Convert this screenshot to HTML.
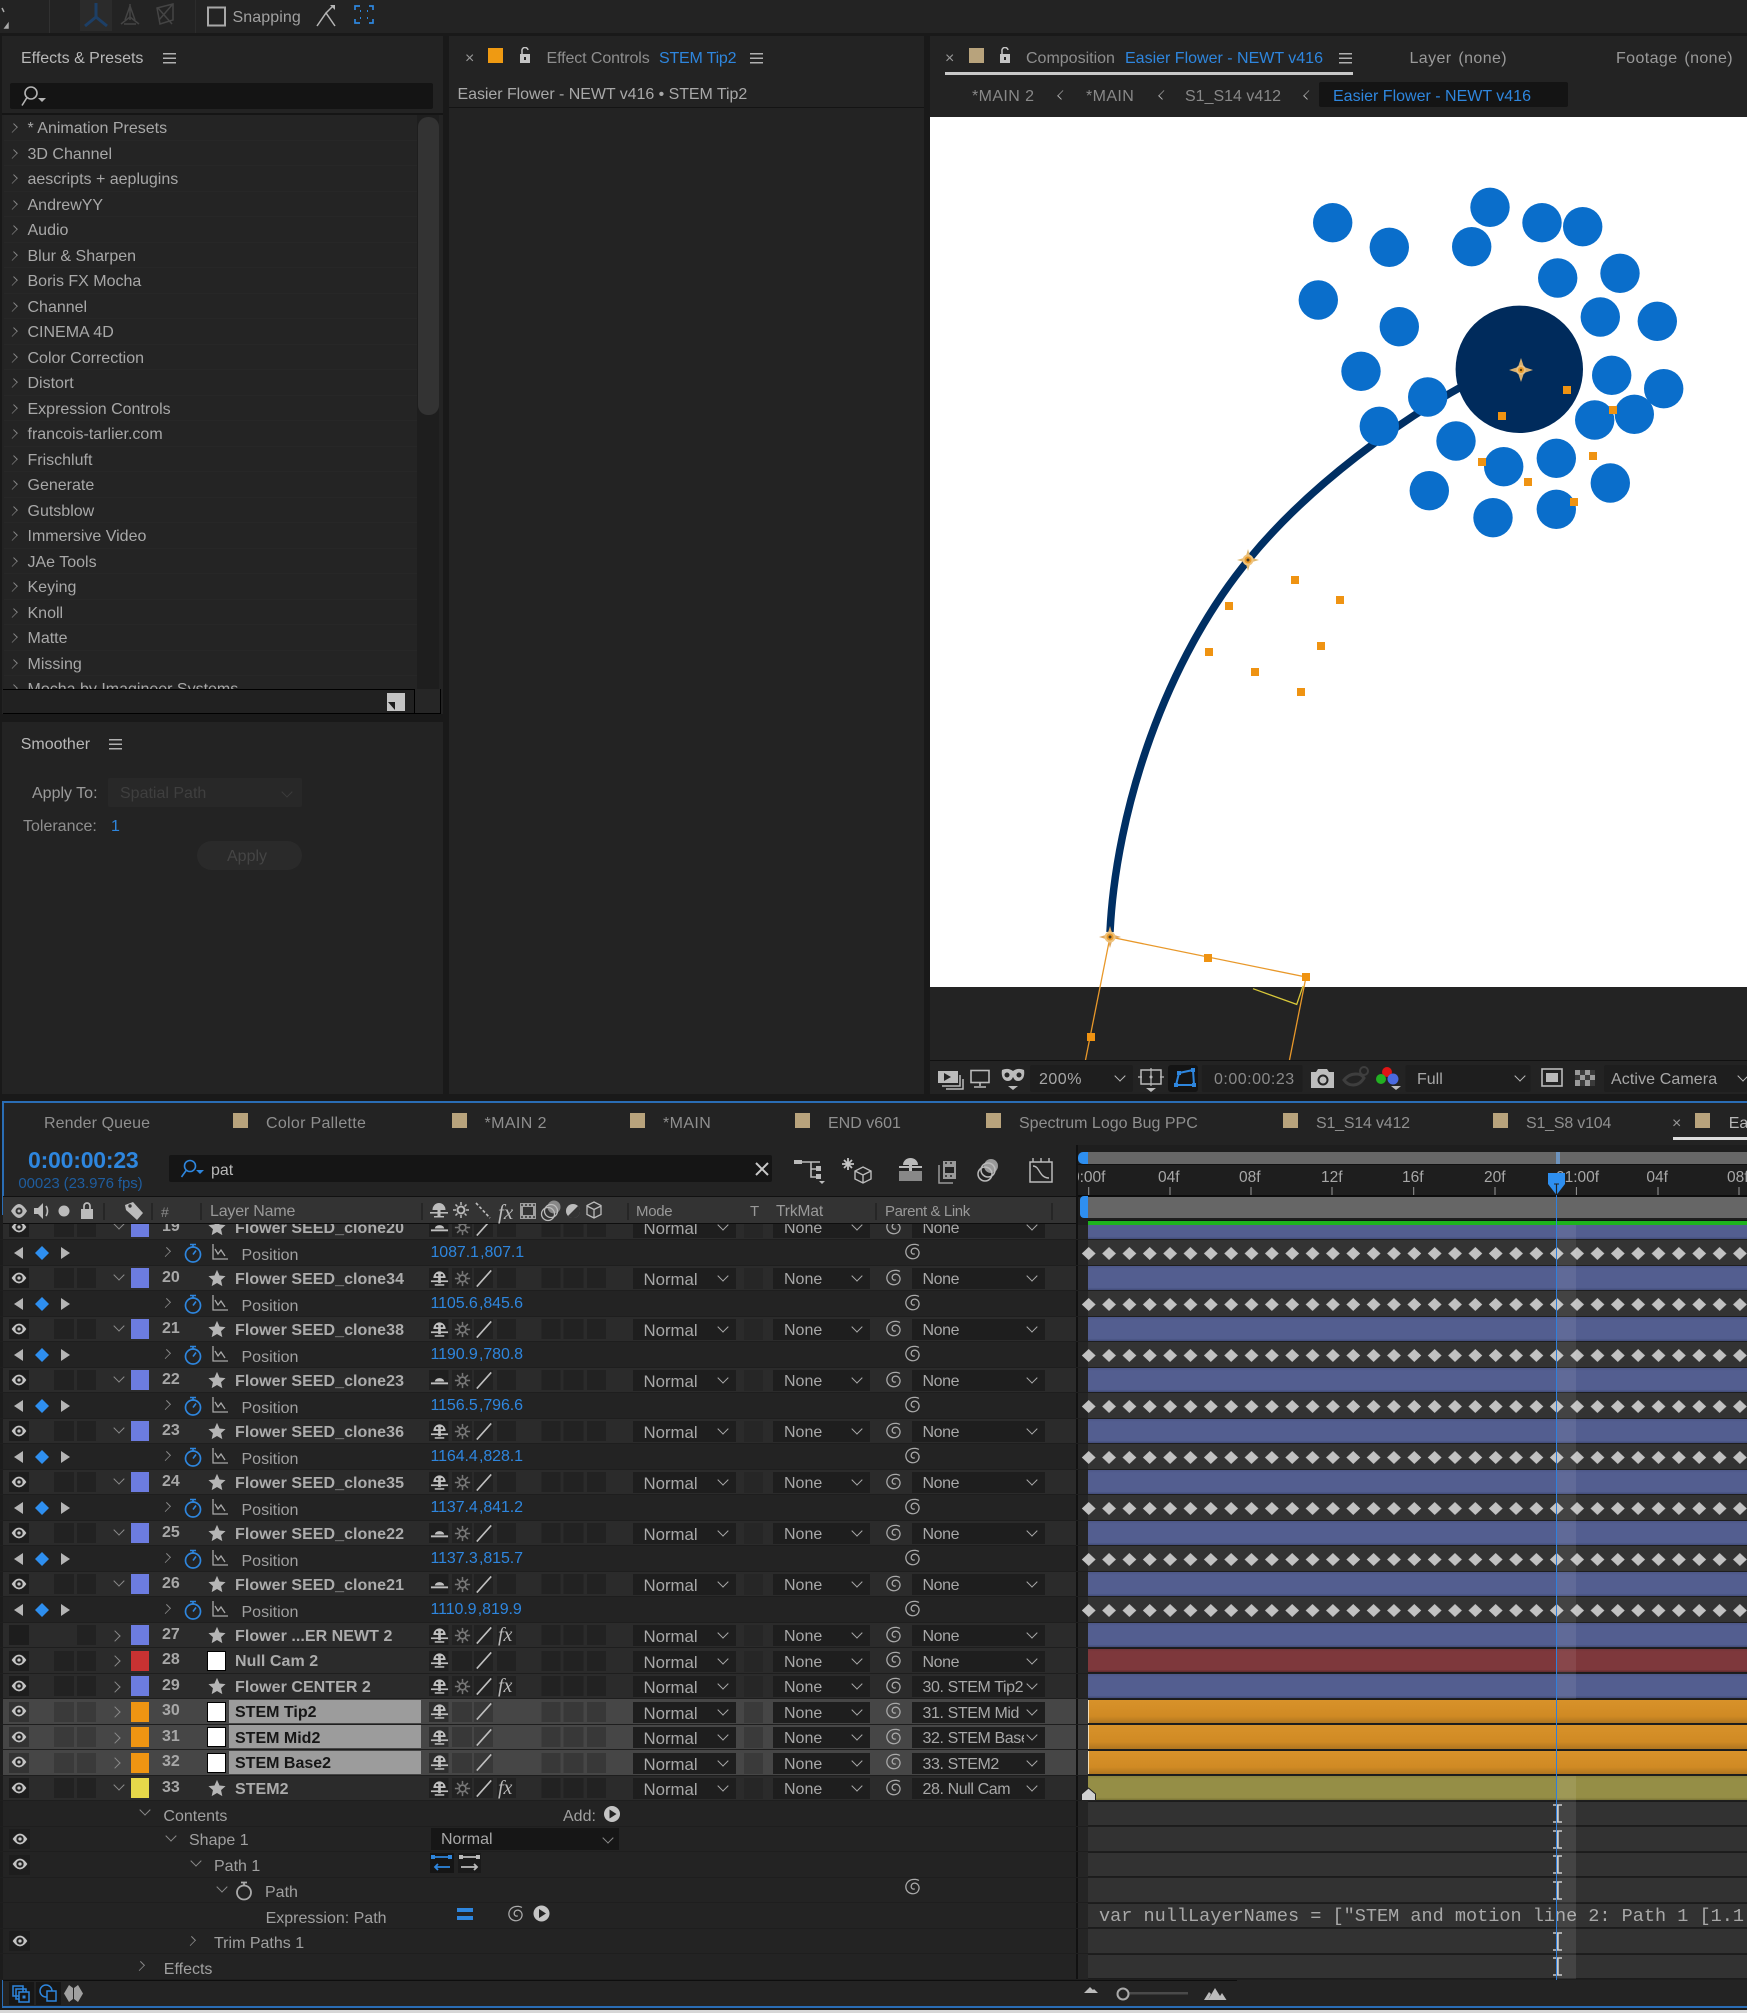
<!DOCTYPE html>
<html><head><meta charset="utf-8"><title>After Effects</title>
<style>
html,body{margin:0;padding:0;background:#191919}
#w{position:relative;width:1747px;height:2013px;overflow:hidden;background:#191919;font:16px "Liberation Sans",sans-serif;color:#a8a8a8}
.a{position:absolute;white-space:nowrap;line-height:20px;transform:translateY(1px)}
.d{position:absolute}
.bl{color:#2e86de}
.hb{position:absolute;width:13px;height:11px;background:repeating-linear-gradient(#b0b0b0 0 1.5px,transparent 1.5px 4.5px)}
.sw{position:absolute;width:15px;height:15px;background:#b8a37c}
.cv{position:absolute;width:7px;height:7px;border-left:1.6px solid #b0b0b0;border-bottom:1.6px solid #b0b0b0;transform:rotate(45deg) scaleX(.7)}
.list{position:absolute;left:4px;top:115.25px;width:413px;height:574px;overflow:hidden}
.list div{position:relative;height:25.5px;line-height:27px;box-sizing:border-box;border-bottom:1px solid #272727;padding-left:23.5px;white-space:nowrap;background:#242424;color:#a8a8a8}
.list div:before{content:"";position:absolute;left:5px;top:9px;width:7px;height:7px;border-right:1.2px solid #888;border-top:1.2px solid #888;transform:rotate(45deg) scaleX(.7)}
#rows{position:absolute;left:0;top:1214.75px;width:1747px;height:765px;overflow:hidden}
.r{position:relative;height:25.5px;box-sizing:border-box;border-bottom:1px solid #1e1e1e}
.r>*{position:absolute;white-space:nowrap;font-weight:normal;font-style:normal;line-height:20px}
.l{background:linear-gradient(90deg,#1c1c1c 3px,#2b2b2b 3px,#2b2b2b 1076px,#111 1076px,#111 1078px,#252525 1078px,#252525 1088px,#1c1c1c 1088px)}
.p{background:linear-gradient(90deg,#1c1c1c 3px,#232323 3px,#232323 1076px,#111 1076px,#111 1078px,#252525 1078px,#252525 1088px,#1c1c1c 1088px)}
.q{background:linear-gradient(90deg,#1c1c1c 3px,#464646 3px,#464646 1076px,#111 1076px,#111 1078px,#3c3c3c 1078px,#3c3c3c 1088px,#1c1c1c 1088px)}
.r b,.sb{display:block}
.b1{left:9px;top:2.5px;width:20px;height:20px;background:#1d1d1d}
.b2{left:54px;top:2.5px;width:19.5px;height:20px;background:#222}
.b3{left:76.5px;top:2.5px;width:19.5px;height:20px;background:#222}
.q .b2,.q .b3{background:#3a3a3a}
.q .b1{background:#333}
.eye{left:11px;top:6px;width:16px;height:12px}
.td,.tr{width:7px;height:7px;border-right:1.3px solid #8a8a8a;border-bottom:1.3px solid #8a8a8a}
.td{transform:rotate(45deg) scaleX(1)}
.tr{transform:rotate(-45deg)}
.l>.td,.q>.td{left:115px;top:5px}
.l>.tr,.q>.tr{left:111px;top:9px}
.lb{left:130.5px;top:2.5px;width:18px;height:20px}
.n{left:162px;top:2px;font-weight:bold!important;color:#a8a8a8}
.st{left:207.5px;top:3.5px;width:18px;height:18px}
.wb{left:207px;top:2.5px;width:17px;height:18px;background:#fff;border:1px solid #000}
.nm{left:235px;top:4px;font-weight:bold!important;color:#acacac;letter-spacing:.05px}
.sel{left:229px;top:.5px;width:192px;height:23px;background:#9c9c9c}
.nd{left:235px;top:4px;font-weight:bold!important;color:#161616}
.sb{left:429px;top:2.5px;width:177px;height:20px;background:linear-gradient(90deg,#1f1f1f 19.5px,transparent 19.5px,transparent 23px,#222 23px,#222 43px,transparent 43px,transparent 45px,#222 45px,#222 64px,transparent 64px,transparent 68px,#222 68px,#222 87px,transparent 87px,transparent 112.5px,#222 112.5px,#222 131.5px,transparent 131.5px,transparent 134.7px,#222 134.7px,#222 154.6px,transparent 154.6px,transparent 158px,#222 158px)}
.q .sb{background:linear-gradient(90deg,#2e2e2e 19.5px,transparent 19.5px,transparent 23px,#383838 23px,#383838 43px,transparent 43px,transparent 45px,#383838 45px,#383838 64px,transparent 64px,transparent 112.5px,#383838 112.5px,#383838 131.5px,transparent 131.5px,transparent 134.7px,#383838 134.7px,#383838 154.6px,transparent 154.6px,transparent 158px,#383838 158px)}
.shy{left:430px;top:3px;width:19px;height:19px}
.sun{left:454px;top:4px;width:17px;height:17px}
.sl{left:475px;top:3px;width:18px;height:19px}
.fx{left:498px;top:1px;font:italic 20px "Liberation Serif",serif!important;color:#b8b8b8!important;line-height:22px!important}
.m,.tm,.pb{top:2.5px;height:21px;line-height:24px!important;background:#1e1e1e;color:#a8a8a8;box-sizing:border-box}
.m{left:632.5px;width:103.5px;padding-left:11px;font-size:16.8px}
.tb{left:744px;top:2.5px;width:19px;height:21px;background:#262626}
.q .tb{background:#3a3a3a}
.tm{left:773px;width:97px;padding-left:11px}
.pb{left:912px;width:133px;padding-left:10.5px;letter-spacing:-.4px}
.m:after,.tm:after,.pb:after{content:"";position:absolute;right:9px;top:4px;width:7px;height:7px;border-right:1.2px solid #aaa;border-bottom:1.2px solid #aaa;transform:rotate(45deg)}
.pb u{display:block;width:101px;overflow:hidden;text-decoration:none}
.sp1{left:885px;top:3px;width:18px;height:18px}
.sp2{left:904px;top:3px;width:18px;height:18px}
.bar{left:1088px;width:659px;top:.5px;height:23.5px}
.bb{background:linear-gradient(#4c5788,#535e90 12%,#535e90 90%,#414b78)}
.br{background:linear-gradient(#743438,#7e383c 12%,#7e383c 90%,#5f2a2e)}
.bo{background:linear-gradient(#d8922a,#d08a24 70%,#b07520);border-left:1.5px solid #f0dcb8;box-sizing:border-box}
.by{background:linear-gradient(#8a8440,#958e46 12%,#958e46 90%,#7a7436)}
.be{background:#323232}
.kf{left:1080px;top:0;width:667px;height:25px}
.kl{left:14px;top:7px;width:10px;height:12px}
.kd{left:35px;top:6px;width:14px;height:14px}
.kr{left:60px;top:7px;width:10px;height:12px}
.pv{left:162px;top:8px;width:7px;height:7px;border-right:1.2px solid #8a8a8a;border-top:1.2px solid #8a8a8a;transform:rotate(45deg) scaleX(.75)}
.sw2{left:184px;top:3px;width:18px;height:20px}
.gr{left:211px;top:3px;width:18px;height:18px}
.pt{left:241.5px;top:5.5px;color:#a0a0a0}
.v{left:430.5px;top:2.5px;color:#2e86de;word-spacing:-3px;letter-spacing:-.1px}
.c{color:#a0a0a0}
.ib{left:1552px;top:3px;width:11px;height:19px}
</style></head><body><div id="w">
<svg width="0" height="0" style="position:absolute">
<defs>
<pattern id="dp" patternUnits="userSpaceOnUse" x="-1.475" y="0" width="20.35" height="25"><polygon points="10.175,7 17.1,13.5 10.175,20 3.3,13.5" fill="#c2c2c2"/></pattern>
<symbol id="eye" viewBox="0 0 24 18"><path d="M1 9C5 3 9 1 12 1s7 2 11 8c-4 6-8 8-11 8S5 15 1 9z" fill="#c4c4c4"/><circle cx="12" cy="9" r="5.500" fill="#222"/><circle cx="12" cy="9" r="2.500" fill="#c4c4c4"/></symbol>
<symbol id="shy" viewBox="0 0 20 20"><path d="M3.500 9.500a6.500 7 0 0 1 13 0z" fill="#c0c0c0"/><circle cx="7.500" cy="6.500" r="1.300" fill="#222"/><circle cx="12.500" cy="6.500" r="1.300" fill="#222"/><rect x="8.600" y="9" width="2.800" height="6" fill="#c0c0c0"/><rect x="1" y="12" width="18" height="1.800" fill="#c0c0c0"/><rect x="5" y="16" width="10" height="1.600" fill="#c0c0c0"/></symbol>
<symbol id="fl" viewBox="0 0 20 20"><path d="M5 11a5 3.500 0 0 1 10 0z" fill="#c0c0c0"/><rect x="1" y="12" width="18" height="2" fill="#c0c0c0"/></symbol>
<symbol id="sun" viewBox="0 0 20 20"><circle cx="10" cy="10" r="4" fill="none" stroke="#777" stroke-width="2"/><path d="M10 1v4M10 15v4M1 10h4M15 10h4M3.600 3.600l3 3M13.400 13.400l3 3M16.400 3.600l-3 3M6.600 13.400l-3 3" stroke="#777" stroke-width="1.800"/></symbol>
<symbol id="sl" viewBox="0 0 20 20"><path d="M2 19L18 1" stroke="#c0c0c0" stroke-width="1.800"/></symbol>
<symbol id="star" viewBox="0 0 20 20"><polygon points="10,1 12.800,7.200 19.500,7.900 14.500,12.400 15.900,19 10,15.600 4.100,19 5.500,12.400 .5,7.900 7.200,7.200" fill="#b5b5b5"/></symbol>
<symbol id="sp" viewBox="0 0 20 20"><path d="M16.500 2.800C15 1.500 11 1 8 2 3.500 3.500 1 8 2.500 12.500c1.500 4 6 6 10 4.500 4-1.500 5.500-6.500 3-9.500-2.500-3-7-2-7.500 1.500-.3 2.500 2 4 4 3" fill="none" stroke="#aaa" stroke-width="1.400"/></symbol>
<symbol id="tl" viewBox="0 0 10 12"><polygon points="9,0 9,12 0,6" fill="#b5b5b5"/></symbol>
<symbol id="trr" viewBox="0 0 10 12"><polygon points="1,0 1,12 10,6" fill="#b5b5b5"/></symbol>
<symbol id="kd" viewBox="0 0 14 14"><polygon points="7,0 14,7 7,14 0,7" fill="#2e8ff0"/></symbol>
<symbol id="sw" viewBox="0 0 18 20"><circle cx="9" cy="11.500" r="7.500" fill="none" stroke="#2e86de" stroke-width="1.700"/><path d="M6 1.500h6M9 2v2.500M9 11.500l3-4" stroke="#2e86de" stroke-width="1.600" fill="none"/></symbol>
<symbol id="gr" viewBox="0 0 18 18"><path d="M2 1v15h15M4 6l3 5 3-4 4 6" fill="none" stroke="#a8a8a8" stroke-width="1.300"/></symbol>
<symbol id="ib" viewBox="0 0 11 19"><path d="M1 1h9M1 18h9" stroke="#c8c8c8" stroke-width="1.500"/><path d="M5.500 1v17" stroke="#c8c8c8" stroke-width="2.500"/></symbol>
</defs></svg>

<!-- top toolbar -->
<div class="d" style="left:0;top:0;width:1747px;height:33px;background:#232323"></div>
<div class="d" style="left:49px;top:0;width:1px;height:33px;background:#313131"></div>
<div class="d" style="left:195px;top:0;width:1px;height:33px;background:#2c2c2c"></div>
<div class="d" style="left:80px;top:0;width:32px;height:31px;background:#2b2b2b"></div>
<svg class="d" style="left:0;top:0" width="380" height="33"><path d="M2 8l2 4M8 24v4h-3z" stroke="#aaa" stroke-width="1.500" fill="#aaa"/><path d="M96 3v14M96 17l-11 9M96 17l11 9" stroke="#1d3f66" stroke-width="3" fill="none"/><path d="M130 4v16M130 17l-9 7M130 17l9 7M124 24h12M130 6l-5 14M130 6l5 14" stroke="#444" stroke-width="1.500" fill="none"/><path d="M157 8l16-4v16l-13 4zM158 8l14 16M172 5l-13 15" stroke="#444" stroke-width="1.500" fill="none"/><rect x="208" y="7.500" width="17" height="18" fill="none" stroke="#a8a8a8" stroke-width="2"/><path d="M317 26l9-13 9 13M326 13l7-7" stroke="#b5b5b5" stroke-width="1.500" fill="none"/><path d="M330 5h5v5z" fill="#b5b5b5"/><path d="M355 10V6h5M369 6h4v4M355 19v4h5M369 23h4v-4" stroke="#2e86de" stroke-width="1.700" fill="none"/><path d="M360 11h1M367 11h1M360 18h1M367 18h1" stroke="#2e86de" stroke-width="2"/></svg>
<div class="a" style="left:232.500px;top:7px;color:#a0a0a0;letter-spacing:.1px">Snapping</div>

<!-- Effects panel -->
<div class="d" style="left:2px;top:36px;width:441px;height:678px;background:#232323"></div>
<div class="a" style="left:21px;top:48px;color:#b8b8b8">Effects &amp; Presets</div>
<div class="hb" style="left:163px;top:53px"></div>
<div class="d" style="left:10px;top:83px;width:423px;height:26px;background:#141414;border-radius:2px"></div>
<svg class="d" style="left:18px;top:85px" width="30" height="23"><circle cx="13" cy="8" r="6" fill="none" stroke="#b4b4b4" stroke-width="1.600"/><path d="M9 12.500l-5 8" stroke="#b4b4b4" stroke-width="1.600"/><path d="M20 13h8l-4 4z" fill="#b4b4b4"/></svg>
<div class="d" style="left:2px;top:113px;width:441px;height:2px;background:#151515"></div>
<div class="list">
<div>* Animation Presets</div><div>3D Channel</div><div>aescripts + aeplugins</div><div>AndrewYY</div><div>Audio</div><div>Blur &amp; Sharpen</div><div>Boris FX Mocha</div><div>Channel</div><div>CINEMA 4D</div><div>Color Correction</div><div>Distort</div><div>Expression Controls</div><div>francois-tarlier.com</div><div>Frischluft</div><div>Generate</div><div>Gutsblow</div><div>Immersive Video</div><div>JAe Tools</div><div>Keying</div><div>Knoll</div><div>Matte</div><div>Missing</div><div>Mocha by Imagineer Systems</div>
</div>
<div class="d" style="left:417px;top:115px;width:22px;height:574px;background:#1e1e1e"></div>
<div class="d" style="left:418px;top:117px;width:21px;height:298px;background:#333;border-radius:10px"></div>
<div class="d" style="left:3px;top:689px;width:412px;height:25px;box-sizing:border-box;border-top:1px solid #000;border-bottom:1px solid #000;border-right:1px solid #000;background:#212121"></div>
<div class="d" style="left:415px;top:689px;width:26px;height:25px;background:#262626;box-sizing:border-box;border-bottom:1px solid #000;border-right:1px solid #000"></div>
<div class="d" style="left:387px;top:693px;width:18px;height:18px;background:#c4c4c4"></div>
<svg class="d" style="left:387px;top:701px" width="10" height="10"><path d="M1 1h7v8z" fill="#1c1c1c"/></svg>

<!-- Smoother panel -->
<div class="d" style="left:2px;top:722px;width:441px;height:372px;background:#232323"></div>
<div class="a" style="left:20.700px;top:734px;color:#b8b8b8">Smoother</div>
<div class="hb" style="left:109px;top:739px"></div>
<div class="a" style="left:32px;top:783px;color:#9a9a9a">Apply To:</div>
<div class="d" style="left:108px;top:778px;width:194px;height:29px;background:#282828;border-radius:2px"></div>
<div class="a" style="left:120px;top:783px;color:#3f3f3f">Spatial Path</div>
<div class="d" style="left:283px;top:788px;width:7px;height:7px;border-right:1px solid #3c3c3c;border-bottom:1px solid #3c3c3c;transform:rotate(45deg)"></div>
<div class="a" style="left:23px;top:816px;color:#8f8f8f">Tolerance:</div>
<div class="a bl" style="left:111px;top:816px">1</div>
<div class="d" style="left:197px;top:841px;width:105px;height:29px;background:#2a2a2a;border-radius:15px"></div>
<div class="a" style="left:227px;top:846px;color:#454545">Apply</div>

<!-- Effect Controls -->
<div class="d" style="left:449px;top:36px;width:475px;height:1058px;background:#232323"></div>
<div class="a" style="left:465px;top:48px;color:#999">×</div>
<div class="d" style="left:488px;top:48px;width:15px;height:15px;background:#ef9a12"></div>
<svg class="d" style="left:518px;top:47px" width="14" height="16"><path d="M4 7V4a3 3 0 0 1 6-1" fill="none" stroke="#c4c4c4" stroke-width="1.500"/><rect x="2" y="7" width="10" height="9" fill="#c4c4c4"/><rect x="6" y="10" width="2" height="3" fill="#222"/></svg>
<div class="a" style="left:546.500px;top:48px;color:#8e8e8e;letter-spacing:-.1px">Effect Controls</div>
<div class="a bl" style="left:659px;top:48px;letter-spacing:-.2px">STEM Tip2</div>
<div class="hb" style="left:750px;top:53px"></div>
<div class="a" style="left:457.500px;top:84px;color:#a8a8a8;letter-spacing:-.05px">Easier Flower - NEWT v416 • STEM Tip2</div>
<div class="d" style="left:449px;top:107px;width:475px;height:1px;background:#141414"></div>

<!-- Composition -->
<div class="d" style="left:930px;top:36px;width:817px;height:81px;background:#232323"></div>
<div class="a" style="left:945px;top:48px;color:#999">×</div>
<div class="d" style="left:968.600px;top:48px;width:15px;height:15px;background:#b8a37c"></div>
<svg class="d" style="left:998px;top:47px" width="14" height="16"><path d="M4 7V4a3 3 0 0 1 6-1" fill="none" stroke="#c4c4c4" stroke-width="1.500"/><rect x="2" y="7" width="10" height="9" fill="#c4c4c4"/><rect x="6" y="10" width="2" height="3" fill="#222"/></svg>
<div class="a" style="left:1026px;top:48px;color:#8e8e8e">Composition</div>
<div class="a bl" style="left:1125px;top:48px">Easier Flower - NEWT v416</div>
<div class="hb" style="left:1339px;top:53px"></div>
<div class="d" style="left:945px;top:72px;width:408px;height:3px;background:#c8c8c8"></div>
<div class="a" style="left:1409.500px;top:48px;color:#9a9a9a;word-spacing:2px;letter-spacing:.4px">Layer (none)</div>
<div class="a" style="left:1616px;top:48px;color:#9a9a9a;word-spacing:2px;letter-spacing:.4px">Footage (none)</div>
<div class="a" style="left:972px;top:86px;color:#888;letter-spacing:.4px">*MAIN 2</div>
<i class="cv" style="left:1058px;top:91px"></i>
<div class="a" style="left:1086px;top:86px;color:#888;letter-spacing:.4px">*MAIN</div>
<i class="cv" style="left:1159px;top:91px"></i>
<div class="a" style="left:1185px;top:86px;color:#888">S1_S14 v412</div>
<i class="cv" style="left:1304px;top:91px"></i>
<div class="d" style="left:1319px;top:82px;width:249px;height:25px;background:#141414;border-radius:2px"></div>
<div class="a bl" style="left:1333px;top:86px">Easier Flower - NEWT v416</div>

<!-- viewer -->
<div class="d" style="left:930px;top:117px;width:817px;height:870px;background:#fff"></div>
<div class="d" style="left:930px;top:987px;width:817px;height:107px;background:#232323"></div>
<svg class="d" style="left:930px;top:117px" width="817" height="943" viewBox="930 117 817 943">
<path d="M1110 932C1116 810 1165 660 1250 558C1310 485 1400 420 1470 382" fill="none" stroke="#002f63" stroke-width="7.500"/>
<circle cx="1519.300" cy="369.300" r="63.700" fill="#002b5c"/>
<g fill="#0a6ecb"><circle cx="1332.700" cy="222.700" r="19.700"/><circle cx="1389.300" cy="247.300" r="19.700"/><circle cx="1490" cy="207.300" r="19.700"/><circle cx="1471.700" cy="246.700" r="19.700"/><circle cx="1542" cy="222.700" r="19.700"/><circle cx="1582.700" cy="226.700" r="19.700"/><circle cx="1557.700" cy="278" r="19.700"/><circle cx="1620" cy="273.300" r="19.700"/><circle cx="1318.300" cy="300" r="19.700"/><circle cx="1399.300" cy="326.700" r="19.700"/><circle cx="1600.300" cy="317" r="19.700"/><circle cx="1657.300" cy="321.300" r="19.700"/><circle cx="1361" cy="371.300" r="19.700"/><circle cx="1427.700" cy="397" r="19.700"/><circle cx="1611.700" cy="375.300" r="19.700"/><circle cx="1663.700" cy="388.700" r="19.700"/><circle cx="1379.300" cy="426.300" r="19.700"/><circle cx="1594.700" cy="420" r="19.700"/><circle cx="1634.300" cy="414.300" r="19.700"/><circle cx="1456" cy="441" r="19.700"/><circle cx="1503.700" cy="466.700" r="19.700"/><circle cx="1556.300" cy="458.300" r="19.700"/><circle cx="1610.300" cy="483" r="19.700"/><circle cx="1429.300" cy="490.700" r="19.700"/><circle cx="1493" cy="517.700" r="19.700"/><circle cx="1556.300" cy="509.300" r="19.700"/></g>
<path d="M1110 937L1306 977M1110 937L1085.500 1060M1306 977L1289.500 1060" stroke="#e8982a" stroke-width="1.300" fill="none"/>
<path d="M1253 988.700L1296.700 1004.400L1303 986" stroke="#d8c83a" stroke-width="1.300" fill="none"/>
<g fill="#ef9312"><rect x="1563" y="386" width="8" height="8"/><rect x="1498" y="412" width="8" height="8"/><rect x="1609" y="406" width="8" height="8"/><rect x="1589" y="452" width="8" height="8"/><rect x="1478" y="458" width="8" height="8"/><rect x="1524" y="478" width="8" height="8"/><rect x="1570" y="498" width="8" height="8"/><rect x="1291" y="576" width="8" height="8"/><rect x="1336" y="596" width="8" height="8"/><rect x="1225" y="602" width="8" height="8"/><rect x="1317" y="642" width="8" height="8"/><rect x="1205" y="648" width="8" height="8"/><rect x="1251" y="668" width="8" height="8"/><rect x="1297" y="688" width="8" height="8"/><rect x="1204" y="954" width="8" height="8"/><rect x="1302" y="973" width="8" height="8"/><rect x="1087" y="1033" width="8" height="8"/></g>
<g><polygon points="1521,358 1524,367 1533,370 1524,373 1521,382 1518,373 1509,370 1518,367" fill="#d8b070"/><circle cx="1521" cy="370" r="5" fill="#e8c080"/><circle cx="1521" cy="370" r="3" fill="#e89a2a"/><circle cx="1521" cy="370" r="1.200" fill="#5a4010"/>
<polygon points="1248,549 1250.500,557.500 1259,560 1250.500,562.500 1248,571 1245.500,562.500 1237,560 1245.500,557.500" fill="#e0b870"/><circle cx="1248" cy="560" r="5.500" fill="#efc37c"/><circle cx="1248" cy="560" r="3.500" fill="#e89a2a"/><circle cx="1248" cy="560" r="1.500" fill="#4a3a20"/>
<polygon points="1110,926 1112.500,934.500 1121,937 1112.500,939.500 1110,948 1107.500,939.500 1099,937 1107.500,934.500" fill="#e0a860"/><circle cx="1110" cy="937" r="5.500" fill="#efc37c"/><circle cx="1110" cy="937" r="3.500" fill="#e89a2a"/><circle cx="1110" cy="937" r="1.500" fill="#4a3a20"/></g>
</svg>
<div class="d" style="left:930px;top:1060px;width:817px;height:1px;background:#111"></div>
<!-- viewer toolbar -->
<svg class="d" style="left:930px;top:1062px" width="817" height="32">
<path d="M8 9h20v12H8z" fill="#bbb"/><path d="M14 11l7 4-7 4z" fill="#232323"/><path d="M30 13v11H12" fill="none" stroke="#bbb" stroke-width="1.500"/><path d="M33 17v10H16" fill="none" stroke="#bbb" stroke-width="1.500"/>
<rect x="41" y="8.500" width="18" height="12" fill="none" stroke="#bbb" stroke-width="1.600"/><path d="M50 20v4M44 25h12" stroke="#bbb" stroke-width="1.600"/>
<path d="M72 8c5-2 8-1 11 1 3-2 6-3 11-1 1 6-1 11-6 11-3 0-4-2-5-4-1 2-2 4-5 4-5 0-7-5-6-11z" fill="#bbb"/><circle cx="77" cy="13" r="2.500" fill="#232323"/><circle cx="89" cy="13" r="2.500" fill="#232323"/><path d="M78 24h10l-5 4z" fill="#bbb"/>
<rect x="100" y="3" width="103" height="27" fill="#1e1e1e" rx="2"/>
<rect x="211" y="8" width="20" height="14" fill="none" stroke="#bbb" stroke-width="1.500"/><path d="M221 6v18M208 15h4M230 15h4" stroke="#bbb" stroke-width="1.200"/><circle cx="221" cy="15" r="1.500" fill="#bbb"/><path d="M216 26h10l-5 4z" fill="#bbb"/>
<rect x="238" y="3" width="30" height="27" fill="#141414" rx="3"/><path d="M246 23l3-12 14-3 1 15z" fill="none" stroke="#2e86de" stroke-width="2"/><g fill="#2e86de"><rect x="244" y="21" width="4" height="4"/><rect x="262" y="21" width="4" height="4"/><rect x="247" y="9" width="4" height="4"/><rect x="261" y="6" width="4" height="4"/></g>
<rect x="271.700" y="3" width="101" height="27" fill="#1e1e1e" rx="2"/>
<path d="M381 10h5l2-3h9l2 3h5v16h-23z" fill="#bdbdbd"/><circle cx="393" cy="18" r="4.500" fill="#bdbdbd" stroke="#232323" stroke-width="2"/>
<path d="M414 18c4-5 8-6 12-6s6 1 8 4c-3 5-7 7-11 7s-7-2-9-5z" fill="none" stroke="#3e3e3e" stroke-width="3"/><circle cx="434" cy="9" r="4" fill="none" stroke="#3e3e3e" stroke-width="2"/>
<circle cx="457" cy="10" r="5" fill="#e01515"/><circle cx="451" cy="17" r="5" fill="#22b022"/><circle cx="463" cy="17" r="5.500" fill="#4a6ae0"/><path d="M461 24h10l-5 4z" fill="#bbb"/>
<rect x="475.500" y="3" width="125" height="27" fill="#1e1e1e" rx="2"/>
<rect x="612" y="7" width="20" height="17" fill="none" stroke="#bbb" stroke-width="1.600"/><rect x="616" y="11" width="12" height="9" fill="#bbb"/>
<rect x="645" y="8" width="20" height="16" fill="#9a9a9a"/><path d="M650 8h5v5h-5zM660 8h5v5h-5zM645 13h5v5h-5zM655 13h5v5h-5zM650 18h5v6h-5zM660 18h5v6h-5z" fill="#3a3a3a"/>
<rect x="674" y="3" width="143" height="27" fill="#1e1e1e" rx="2"/>
</svg>
<div class="a" style="left:1039px;top:1068.500px;color:#a8a8a8;letter-spacing:.5px">200%</div>
<div class="d" style="left:1116px;top:1072px;width:7px;height:7px;border-right:1.300px solid #bbb;border-bottom:1.300px solid #bbb;transform:rotate(45deg)"></div>
<div class="a" style="left:1214px;top:1068.500px;color:#8a8a8a;letter-spacing:.5px">0:00:00:23</div>
<div class="a" style="left:1417px;top:1068.500px;color:#a8a8a8">Full</div>
<div class="d" style="left:1516px;top:1072px;width:7px;height:7px;border-right:1.300px solid #bbb;border-bottom:1.300px solid #bbb;transform:rotate(45deg)"></div>
<div class="a" style="left:1611px;top:1068.500px;color:#a8a8a8;letter-spacing:.1px">Active Camera</div>
<div class="d" style="left:1739px;top:1072px;width:7px;height:7px;border-right:1.300px solid #bbb;border-bottom:1.300px solid #bbb;transform:rotate(45deg)"></div>

<!-- Timeline frame -->
<div class="d" style="left:2px;top:1101px;width:1745px;height:906px;background:#232323"></div>
<div class="d" style="left:2px;top:1101px;width:1745px;height:1.500px;background:#2a6db5"></div>
<div class="d" style="left:2px;top:1101px;width:1.500px;height:906px;background:#2a6db5"></div>
<div class="a" style="left:44px;top:1113px;color:#8f8f8f;letter-spacing:.1px">Render Queue</div>
<div class="sw" style="left:233px;top:1113px"></div><div class="a" style="left:266px;top:1113px;color:#8f8f8f;letter-spacing:.3px">Color Pallette</div>
<div class="sw" style="left:452px;top:1113px"></div><div class="a" style="left:484.500px;top:1113px;color:#8f8f8f;letter-spacing:.4px">*MAIN 2</div>
<div class="sw" style="left:630px;top:1113px"></div><div class="a" style="left:663px;top:1113px;color:#8f8f8f;letter-spacing:.4px">*MAIN</div>
<div class="sw" style="left:795px;top:1113px"></div><div class="a" style="left:828px;top:1113px;color:#8f8f8f">END v601</div>
<div class="sw" style="left:986px;top:1113px"></div><div class="a" style="left:1019px;top:1113px;color:#8f8f8f">Spectrum Logo Bug PPC</div>
<div class="sw" style="left:1283px;top:1113px"></div><div class="a" style="left:1316px;top:1113px;color:#8f8f8f;letter-spacing:-.2px">S1_S14 v412</div>
<div class="sw" style="left:1492.600px;top:1113px"></div><div class="a" style="left:1526px;top:1113px;color:#8f8f8f;letter-spacing:-.2px">S1_S8 v104</div>
<div class="a" style="left:1672px;top:1113px;color:#999">×</div>
<div class="sw" style="left:1695px;top:1113px"></div><div class="a" style="left:1728.700px;top:1113px;color:#b8b8b8">Easier Flower</div>
<div class="d" style="left:1673px;top:1137px;width:74px;height:3px;background:#dcdcdc"></div>

<div class="a" style="left:28px;top:1149px;font-size:23px;font-weight:bold;color:#2e86de;line-height:20px;letter-spacing:-.2px">0:00:00:23</div>
<div class="a" style="left:18.400px;top:1173px;font-size:15px;color:#1f5d9e;letter-spacing:-.1px">00023 (23.976 fps)</div>
<div class="d" style="left:169px;top:1155px;width:603px;height:27px;background:#151515;border-radius:2px"></div>
<svg class="d" style="left:178px;top:1158px" width="28" height="22"><circle cx="12" cy="8" r="5.500" fill="none" stroke="#2e86de" stroke-width="1.600"/><path d="M8.500 12l-5 7" stroke="#2e86de" stroke-width="1.600"/><path d="M18 12h8l-4 4z" fill="#2e86de"/></svg>
<div class="a" style="left:211px;top:1160px;color:#b8b8b8">pat</div>
<svg class="d" style="left:755px;top:1162px" width="14" height="14"><path d="M1 1l12 12M13 1L1 13" stroke="#c8c8c8" stroke-width="2"/></svg>
<!-- timeline tool icons -->
<svg class="d" style="left:790px;top:1155px" width="270" height="30">
<path d="M6 7h10M16 7h14M21 7v15h9M21 14h8" stroke="#bbb" stroke-width="1.600" fill="none"/><rect x="4" y="5" width="8" height="4" fill="#bbb"/><rect x="26" y="11" width="5" height="5" fill="#bbb"/><rect x="26" y="19" width="5" height="5" fill="#bbb"/><path d="M29 26h6l-3 3z" fill="#bbb"/>
<path d="M58 3v12M52 9h12M54 5l8 8M62 5l-8 8" stroke="#c4c4c4" stroke-width="1.800"/><path d="M73 12l8 4v8l-8 4-8-4v-8zM65 16l8 4 8-4M73 20v8" stroke="#bbb" stroke-width="1.400" fill="#232323"/>
<path d="M113 10a7.500 7 0 0 1 15 0z" fill="#bbb"/><rect x="119" y="10" width="3" height="6" fill="#bbb"/><rect x="109" y="11" width="23" height="2" fill="#bbb"/><rect x="109" y="16" width="23" height="10" fill="#888"/>
<rect x="153" y="6" width="13" height="18" fill="#999"/><path d="M149 10v18h14" fill="none" stroke="#999" stroke-width="1.500"/><rect x="155" y="12" width="9" height="6" fill="#232323"/><path d="M155 8h2M160 8h2M155 21h2M160 21h2" stroke="#232323" stroke-width="1.500"/>
<circle cx="201" cy="11" r="7" fill="#999"/><circle cx="198" cy="15" r="7" fill="none" stroke="#bbb" stroke-width="1.500"/><circle cx="195" cy="19" r="7" fill="none" stroke="#bbb" stroke-width="1.500"/>
<rect x="240" y="7" width="22" height="20" fill="none" stroke="#bbb" stroke-width="1.500"/><path d="M243 11c7 0 6 12 16 12M243 3v4M259 3v4M251 3v4" stroke="#bbb" stroke-width="1.400" fill="none"/>
</svg>

<!-- rows -->
<div id="rows">
<div class="r l"><b class="b1"></b><svg class="eye"><use href="#eye"/></svg><b class="b2"></b><b class="b3"></b><i class="td"></i><i class="lb" style="background:#6c7ce0"></i><span class="n">19</span><svg class="st"><use href="#star"/></svg><span class="nm">Flower SEED_clone20</span><b class="sb"></b><svg class="shy"><use href="#fl"/></svg><svg class="sun"><use href="#sun"/></svg><svg class="sl"><use href="#sl"/></svg><b class="m">Normal</b><b class="tb"></b><b class="tm">None</b><svg class="sp1"><use href="#sp"/></svg><b class="pb">None</b><i class="bar bb"></i></div>
<div class="r p"><svg class="kl"><use href="#tl"/></svg><svg class="kd"><use href="#kd"/></svg><svg class="kr"><use href="#trr"/></svg><i class="pv"></i><svg class="sw2"><use href="#sw"/></svg><svg class="gr"><use href="#gr"/></svg><span class="pt">Position</span><span class="v">1087.1 ,807.1</span><svg class="sp2"><use href="#sp"/></svg><svg class="kf"><rect x="8" y="0" width="659" height="25" fill="#333"/><rect x="0" y="0" width="667" height="25" fill="url(#dp)"/></svg></div>
<div class="r l"><b class="b1"></b><svg class="eye"><use href="#eye"/></svg><b class="b2"></b><b class="b3"></b><i class="td"></i><i class="lb" style="background:#6c7ce0"></i><span class="n">20</span><svg class="st"><use href="#star"/></svg><span class="nm">Flower SEED_clone34</span><b class="sb"></b><svg class="shy"><use href="#shy"/></svg><svg class="sun"><use href="#sun"/></svg><svg class="sl"><use href="#sl"/></svg><b class="m">Normal</b><b class="tb"></b><b class="tm">None</b><svg class="sp1"><use href="#sp"/></svg><b class="pb">None</b><i class="bar bb"></i></div>
<div class="r p"><svg class="kl"><use href="#tl"/></svg><svg class="kd"><use href="#kd"/></svg><svg class="kr"><use href="#trr"/></svg><i class="pv"></i><svg class="sw2"><use href="#sw"/></svg><svg class="gr"><use href="#gr"/></svg><span class="pt">Position</span><span class="v">1105.6 ,845.6</span><svg class="sp2"><use href="#sp"/></svg><svg class="kf"><rect x="8" y="0" width="659" height="25" fill="#333"/><rect x="0" y="0" width="667" height="25" fill="url(#dp)"/></svg></div>
<div class="r l"><b class="b1"></b><svg class="eye"><use href="#eye"/></svg><b class="b2"></b><b class="b3"></b><i class="td"></i><i class="lb" style="background:#6c7ce0"></i><span class="n">21</span><svg class="st"><use href="#star"/></svg><span class="nm">Flower SEED_clone38</span><b class="sb"></b><svg class="shy"><use href="#shy"/></svg><svg class="sun"><use href="#sun"/></svg><svg class="sl"><use href="#sl"/></svg><b class="m">Normal</b><b class="tb"></b><b class="tm">None</b><svg class="sp1"><use href="#sp"/></svg><b class="pb">None</b><i class="bar bb"></i></div>
<div class="r p"><svg class="kl"><use href="#tl"/></svg><svg class="kd"><use href="#kd"/></svg><svg class="kr"><use href="#trr"/></svg><i class="pv"></i><svg class="sw2"><use href="#sw"/></svg><svg class="gr"><use href="#gr"/></svg><span class="pt">Position</span><span class="v">1190.9 ,780.8</span><svg class="sp2"><use href="#sp"/></svg><svg class="kf"><rect x="8" y="0" width="659" height="25" fill="#333"/><rect x="0" y="0" width="667" height="25" fill="url(#dp)"/></svg></div>
<div class="r l"><b class="b1"></b><svg class="eye"><use href="#eye"/></svg><b class="b2"></b><b class="b3"></b><i class="td"></i><i class="lb" style="background:#6c7ce0"></i><span class="n">22</span><svg class="st"><use href="#star"/></svg><span class="nm">Flower SEED_clone23</span><b class="sb"></b><svg class="shy"><use href="#fl"/></svg><svg class="sun"><use href="#sun"/></svg><svg class="sl"><use href="#sl"/></svg><b class="m">Normal</b><b class="tb"></b><b class="tm">None</b><svg class="sp1"><use href="#sp"/></svg><b class="pb">None</b><i class="bar bb"></i></div>
<div class="r p"><svg class="kl"><use href="#tl"/></svg><svg class="kd"><use href="#kd"/></svg><svg class="kr"><use href="#trr"/></svg><i class="pv"></i><svg class="sw2"><use href="#sw"/></svg><svg class="gr"><use href="#gr"/></svg><span class="pt">Position</span><span class="v">1156.5 ,796.6</span><svg class="sp2"><use href="#sp"/></svg><svg class="kf"><rect x="8" y="0" width="659" height="25" fill="#333"/><rect x="0" y="0" width="667" height="25" fill="url(#dp)"/></svg></div>
<div class="r l"><b class="b1"></b><svg class="eye"><use href="#eye"/></svg><b class="b2"></b><b class="b3"></b><i class="td"></i><i class="lb" style="background:#6c7ce0"></i><span class="n">23</span><svg class="st"><use href="#star"/></svg><span class="nm">Flower SEED_clone36</span><b class="sb"></b><svg class="shy"><use href="#shy"/></svg><svg class="sun"><use href="#sun"/></svg><svg class="sl"><use href="#sl"/></svg><b class="m">Normal</b><b class="tb"></b><b class="tm">None</b><svg class="sp1"><use href="#sp"/></svg><b class="pb">None</b><i class="bar bb"></i></div>
<div class="r p"><svg class="kl"><use href="#tl"/></svg><svg class="kd"><use href="#kd"/></svg><svg class="kr"><use href="#trr"/></svg><i class="pv"></i><svg class="sw2"><use href="#sw"/></svg><svg class="gr"><use href="#gr"/></svg><span class="pt">Position</span><span class="v">1164.4 ,828.1</span><svg class="sp2"><use href="#sp"/></svg><svg class="kf"><rect x="8" y="0" width="659" height="25" fill="#333"/><rect x="0" y="0" width="667" height="25" fill="url(#dp)"/></svg></div>
<div class="r l"><b class="b1"></b><svg class="eye"><use href="#eye"/></svg><b class="b2"></b><b class="b3"></b><i class="td"></i><i class="lb" style="background:#6c7ce0"></i><span class="n">24</span><svg class="st"><use href="#star"/></svg><span class="nm">Flower SEED_clone35</span><b class="sb"></b><svg class="shy"><use href="#shy"/></svg><svg class="sun"><use href="#sun"/></svg><svg class="sl"><use href="#sl"/></svg><b class="m">Normal</b><b class="tb"></b><b class="tm">None</b><svg class="sp1"><use href="#sp"/></svg><b class="pb">None</b><i class="bar bb"></i></div>
<div class="r p"><svg class="kl"><use href="#tl"/></svg><svg class="kd"><use href="#kd"/></svg><svg class="kr"><use href="#trr"/></svg><i class="pv"></i><svg class="sw2"><use href="#sw"/></svg><svg class="gr"><use href="#gr"/></svg><span class="pt">Position</span><span class="v">1137.4 ,841.2</span><svg class="sp2"><use href="#sp"/></svg><svg class="kf"><rect x="8" y="0" width="659" height="25" fill="#333"/><rect x="0" y="0" width="667" height="25" fill="url(#dp)"/></svg></div>
<div class="r l"><b class="b1"></b><svg class="eye"><use href="#eye"/></svg><b class="b2"></b><b class="b3"></b><i class="td"></i><i class="lb" style="background:#6c7ce0"></i><span class="n">25</span><svg class="st"><use href="#star"/></svg><span class="nm">Flower SEED_clone22</span><b class="sb"></b><svg class="shy"><use href="#fl"/></svg><svg class="sun"><use href="#sun"/></svg><svg class="sl"><use href="#sl"/></svg><b class="m">Normal</b><b class="tb"></b><b class="tm">None</b><svg class="sp1"><use href="#sp"/></svg><b class="pb">None</b><i class="bar bb"></i></div>
<div class="r p"><svg class="kl"><use href="#tl"/></svg><svg class="kd"><use href="#kd"/></svg><svg class="kr"><use href="#trr"/></svg><i class="pv"></i><svg class="sw2"><use href="#sw"/></svg><svg class="gr"><use href="#gr"/></svg><span class="pt">Position</span><span class="v">1137.3 ,815.7</span><svg class="sp2"><use href="#sp"/></svg><svg class="kf"><rect x="8" y="0" width="659" height="25" fill="#333"/><rect x="0" y="0" width="667" height="25" fill="url(#dp)"/></svg></div>
<div class="r l"><b class="b1"></b><svg class="eye"><use href="#eye"/></svg><b class="b2"></b><b class="b3"></b><i class="td"></i><i class="lb" style="background:#6c7ce0"></i><span class="n">26</span><svg class="st"><use href="#star"/></svg><span class="nm">Flower SEED_clone21</span><b class="sb"></b><svg class="shy"><use href="#fl"/></svg><svg class="sun"><use href="#sun"/></svg><svg class="sl"><use href="#sl"/></svg><b class="m">Normal</b><b class="tb"></b><b class="tm">None</b><svg class="sp1"><use href="#sp"/></svg><b class="pb">None</b><i class="bar bb"></i></div>
<div class="r p"><svg class="kl"><use href="#tl"/></svg><svg class="kd"><use href="#kd"/></svg><svg class="kr"><use href="#trr"/></svg><i class="pv"></i><svg class="sw2"><use href="#sw"/></svg><svg class="gr"><use href="#gr"/></svg><span class="pt">Position</span><span class="v">1110.9 ,819.9</span><svg class="sp2"><use href="#sp"/></svg><svg class="kf"><rect x="8" y="0" width="659" height="25" fill="#333"/><rect x="0" y="0" width="667" height="25" fill="url(#dp)"/></svg></div>
<div class="r l"><b class="b1"></b><b class="b3"></b><i class="tr"></i><i class="lb" style="background:#6c7ce0"></i><span class="n">27</span><svg class="st"><use href="#star"/></svg><span class="nm">Flower ...ER NEWT 2</span><b class="sb"></b><svg class="shy"><use href="#shy"/></svg><svg class="sun"><use href="#sun"/></svg><svg class="sl"><use href="#sl"/></svg><em class="fx">fx</em><b class="m">Normal</b><b class="tb"></b><b class="tm">None</b><svg class="sp1"><use href="#sp"/></svg><b class="pb">None</b><i class="bar bb"></i></div>
<div class="r l"><b class="b1"></b><svg class="eye"><use href="#eye"/></svg><b class="b2"></b><b class="b3"></b><i class="tr"></i><i class="lb" style="background:#c83232"></i><span class="n">28</span><i class="wb"></i><span class="nm">Null Cam 2</span><b class="sb"></b><svg class="shy"><use href="#shy"/></svg><svg class="sl"><use href="#sl"/></svg><b class="m">Normal</b><b class="tb"></b><b class="tm">None</b><svg class="sp1"><use href="#sp"/></svg><b class="pb">None</b><i class="bar br"></i></div>
<div class="r l"><b class="b1"></b><svg class="eye"><use href="#eye"/></svg><b class="b2"></b><b class="b3"></b><i class="tr"></i><i class="lb" style="background:#6c7ce0"></i><span class="n">29</span><svg class="st"><use href="#star"/></svg><span class="nm">Flower CENTER 2</span><b class="sb"></b><svg class="shy"><use href="#shy"/></svg><svg class="sun"><use href="#sun"/></svg><svg class="sl"><use href="#sl"/></svg><em class="fx">fx</em><b class="m">Normal</b><b class="tb"></b><b class="tm">None</b><svg class="sp1"><use href="#sp"/></svg><b class="pb">30. STEM Tip2</b><i class="bar bb"></i></div>
<div class="r q"><b class="b1"></b><svg class="eye"><use href="#eye"/></svg><b class="b2"></b><b class="b3"></b><i class="tr"></i><i class="lb" style="background:#ef9512"></i><span class="n">30</span><i class="wb"></i><i class="sel"></i><span class="nd">STEM Tip2</span><b class="sb"></b><svg class="shy"><use href="#shy"/></svg><svg class="sl"><use href="#sl"/></svg><b class="m">Normal</b><b class="tb"></b><b class="tm">None</b><svg class="sp1"><use href="#sp"/></svg><b class="pb">31. STEM Mid</b><i class="bar bo"></i></div>
<div class="r q"><b class="b1"></b><svg class="eye"><use href="#eye"/></svg><b class="b2"></b><b class="b3"></b><i class="tr"></i><i class="lb" style="background:#ef9512"></i><span class="n">31</span><i class="wb"></i><i class="sel"></i><span class="nd">STEM Mid2</span><b class="sb"></b><svg class="shy"><use href="#shy"/></svg><svg class="sl"><use href="#sl"/></svg><b class="m">Normal</b><b class="tb"></b><b class="tm">None</b><svg class="sp1"><use href="#sp"/></svg><b class="pb"><u>32. STEM Base</u></b><i class="bar bo"></i></div>
<div class="r q"><b class="b1"></b><svg class="eye"><use href="#eye"/></svg><b class="b2"></b><b class="b3"></b><i class="tr"></i><i class="lb" style="background:#ef9512"></i><span class="n">32</span><i class="wb"></i><i class="sel"></i><span class="nd">STEM Base2</span><b class="sb"></b><svg class="shy"><use href="#shy"/></svg><svg class="sl"><use href="#sl"/></svg><b class="m">Normal</b><b class="tb"></b><b class="tm">None</b><svg class="sp1"><use href="#sp"/></svg><b class="pb">33. STEM2</b><i class="bar bo"></i></div>
<div class="r l"><b class="b1"></b><svg class="eye"><use href="#eye"/></svg><b class="b2"></b><b class="b3"></b><i class="td"></i><i class="lb" style="background:#e6d84a"></i><span class="n">33</span><svg class="st"><use href="#star"/></svg><span class="nm">STEM2</span><b class="sb"></b><svg class="shy"><use href="#shy"/></svg><svg class="sun"><use href="#sun"/></svg><svg class="sl"><use href="#sl"/></svg><em class="fx">fx</em><b class="m">Normal</b><b class="tb"></b><b class="tm">None</b><svg class="sp1"><use href="#sp"/></svg><b class="pb">28. Null Cam</b><i class="bar by"></i></div>

<div class="r p"><i class="td" style="left:141px;top:5px"></i><span class="c" style="left:163.400px;top:6px">Contents</span><span class="c" style="left:563px;top:6px">Add:</span><i class="bar be"></i><svg class="ib"><use href="#ib"/></svg></div>
<div class="r p"><b class="b1" style="left:9px;width:21px"></b><svg class="eye" style="left:12px"><use href="#eye"/></svg><i class="td" style="left:167px;top:5px"></i><span class="c" style="left:189px;top:4.500px">Shape 1</span><b style="left:430.500px;top:1px;width:188.500px;height:22px;background:#161616;color:#a8a8a8;padding-left:10.500px;box-sizing:border-box;line-height:23px">Normal</b><i class="td" style="left:604px;top:7px"></i><i class="bar be"></i><svg class="ib"><use href="#ib"/></svg></div>
<div class="r p"><b class="b1" style="left:9px;width:21px"></b><svg class="eye" style="left:12px"><use href="#eye"/></svg><i class="td" style="left:192px;top:5px"></i><span class="c" style="left:214px;top:5px">Path 1</span><svg style="left:430px;top:1px" width="52" height="20"><rect width="24" height="20" fill="#151515"/><rect x="28" width="23" height="20" fill="#1a1a1a"/><path d="M3 4h17M20 14H5M8 11l-3 3 3 3" stroke="#2e86de" stroke-width="1.800" fill="none"/><rect x="1" y="2" width="4" height="4" fill="#2e86de"/><rect x="18" y="2" width="4" height="4" fill="#2e86de"/><path d="M31 4h17M31 14h16M44 11l3 3-3 3" stroke="#bbb" stroke-width="1.800" fill="none"/><rect x="29" y="2" width="4" height="4" fill="#bbb"/><rect x="46" y="2" width="4" height="4" fill="#bbb"/></svg><i class="bar be"></i><svg class="ib"><use href="#ib"/></svg></div>
<div class="r p"><i class="td" style="left:218px;top:5px"></i><svg style="left:235px;top:2px" width="18" height="21"><circle cx="9" cy="12.500" r="7" fill="none" stroke="#aaa" stroke-width="1.800"/><path d="M6 2.500h6M9 3v3" stroke="#aaa" stroke-width="1.700"/></svg><span class="c" style="left:265px;top:5px">Path</span><svg class="sp2" style="top:0"><use href="#sp"/></svg><i class="bar be"></i><svg class="ib"><use href="#ib"/></svg></div>
<div class="r p"><span class="c" style="left:265.600px;top:6px">Expression: Path</span><i style="left:457px;top:2px;width:16px;height:20px;background:linear-gradient(transparent 3px,#2e86de 3px,#2e86de 7px,transparent 7px,transparent 11px,#2e86de 11px,#2e86de 15px,transparent 15px)"></i><svg class="sp1" style="left:507px;top:2px"><use href="#sp"/></svg><svg style="left:533px;top:2px" width="17" height="17"><circle cx="8.500" cy="8.500" r="8" fill="#c4c4c4"/><path d="M6 4l7 4.500-7 4.500z" fill="#232323"/></svg><i class="bar be"></i><span style="left:1099px;top:4px;font:18.550px/20px 'Liberation Mono',monospace;color:#a8a8a8;white-space:pre">var nullLayerNames = ["STEM and motion line 2: Path 1 [1.1</span></div>
<div class="r p"><b class="b1" style="left:9px;width:21px"></b><svg class="eye" style="left:12px"><use href="#eye"/></svg><i class="pv" style="left:187px"></i><span class="c" style="left:214px;top:5px">Trim Paths 1</span><i class="bar be"></i><svg class="ib"><use href="#ib"/></svg></div>
<div class="r p"><i class="pv" style="left:136px"></i><span class="c" style="left:163.800px;top:6px">Effects</span><i class="bar be"></i><svg class="ib"><use href="#ib"/></svg></div>
</div>
<svg class="d" style="left:603px;top:1805px" width="18" height="18"><circle cx="9" cy="9" r="8" fill="#c4c4c4"/><path d="M6.500 4.500l7 4.500-7 4.500z" fill="#232323"/></svg>

<!-- current-frame highlight -->
<div class="d" style="left:1556px;top:1225px;width:20px;height:474px;background:rgba(255,255,255,.08)"></div>
<div class="d" style="left:1556px;top:1776px;width:20px;height:203px;background:rgba(255,255,255,.09)"></div>
<!-- home marker -->
<svg class="d" style="left:1081px;top:1787px" width="15" height="14"><path d="M7.500 1L14.500 7v6.500H.5V7z" fill="#d0d0d0" stroke="#222"/></svg>

<!-- header row -->
<div class="d" style="left:3px;top:1196px;width:1075px;height:28px;background:#333;border-top:1px solid #111;border-bottom:1px solid #0e0e0e;box-sizing:border-box"></div>
<svg class="d" style="left:3px;top:1197px" width="1073" height="27">
<g transform="translate(8,7)"><path d="M0 7C3 2 6 0 8 0s5 2 8 7c-3 5-6 7-8 7S3 12 0 7z" fill="#bbb"/><circle cx="8" cy="7" r="3.500" fill="#333"/><circle cx="8" cy="7" r="1.500" fill="#bbb"/></g>
<path d="M31 11h4l5-5v16l-5-5h-4z" fill="#bbb"/><path d="M43 9c2 3 2 7 0 10" stroke="#bbb" stroke-width="1.600" fill="none"/>
<circle cx="61" cy="14" r="5.500" fill="#bbb"/>
<rect x="78" y="12" width="12" height="10" fill="#bbb"/><path d="M81 12V9a3 3 0 0 1 6 0v3" stroke="#bbb" stroke-width="1.700" fill="none"/>
<path d="M101 6v17M149 6v17M198 6v17M419 6v17M625 6v17M873 6v17M1049 6v17" stroke="#222" stroke-width="1.500"/>
<path d="M122 8l8-3 10 11-6 7-11-10z" fill="#bbb"/><circle cx="127" cy="9" r="1.700" fill="#333"/>
<g transform="translate(427,4) scale(1)"><path d="M2.500 9a6.500 7 0 0 1 13 0z" fill="#bbb"/><rect x="7.500" y="9" width="3" height="6" fill="#bbb"/><rect x="0" y="11" width="18" height="1.600" fill="#bbb"/><rect x="4" y="15" width="10" height="1.500" fill="#bbb"/></g>
<g transform="translate(450,5)" fill="none" stroke="#bbb"><circle cx="8" cy="8" r="3.500" stroke-width="2"/><path d="M8 0v3M8 13v3M0 8h3M13 8h3M2.500 2.500l2 2M11.500 11.500l2 2M13.500 2.500l-2 2M4.500 11.500l-2 2" stroke-width="1.500"/></g>
<path d="M473 6l14 15" stroke="#bbb" stroke-width="1.700" stroke-dasharray="3 2"/>
<rect x="517" y="6" width="16" height="16" fill="#a0a0a0"/><rect x="520" y="10" width="10" height="8" fill="#333"/><path d="M518 8h2M522 8h2M526 8h2M530 8h2M518 20h2M522 20h2M526 20h2M530 20h2" stroke="#333" stroke-width="1.400"/>
<circle cx="551" cy="10" r="6.500" fill="#888"/><circle cx="548" cy="14" r="6.500" fill="none" stroke="#bbb" stroke-width="1.300"/><circle cx="545" cy="17" r="6.500" fill="none" stroke="#bbb" stroke-width="1.300"/>
<circle cx="570" cy="14" r="7" fill="#bbb"/><path d="M575 9a7 7 0 0 1-10 10z" fill="#333"/>
<path d="M591 5l7 3.500v9l-7 3.500-7-3.500v-9zM584 9l7 3.500 7-3.500M591 12.500v8" fill="none" stroke="#bbb" stroke-width="1.300"/>
</svg>
<div class="a" style="left:161px;top:1201px;font-size:14px;color:#8a8a8a">#</div>
<div class="a" style="left:210px;top:1201px;color:#999;letter-spacing:-.2px">Layer Name</div>
<em class="a" style="left:498px;top:1200px;font:italic 21px/22px 'Liberation Serif',serif;color:#bbb">fx</em>
<div class="a" style="left:636px;top:1201px;color:#999;font-size:15px;letter-spacing:-.3px">Mode</div>
<div class="a" style="left:750px;top:1201px;color:#999;font-size:15px">T</div>
<div class="a" style="left:776px;top:1201px;color:#999;letter-spacing:-.1px;font-size:15.500px">TrkMat</div>
<div class="a" style="left:885px;top:1201px;color:#999;font-size:15px;letter-spacing:-.4px">Parent &amp; Link</div>

<!-- timeline top -->
<div class="d" style="left:1076px;top:1145px;width:2px;height:79px;background:#111"></div>
<div class="d" style="left:1078px;top:1145px;width:669px;height:80px;background:#1e1e1e"></div>
<div class="d" style="left:1078px;top:1152px;width:10px;height:12px;background:#2e8ff0;border-radius:5px 0 0 5px"></div>
<div class="d" style="left:1088px;top:1152px;width:659px;height:12px;background:#676767"></div>
<div class="d" style="left:1556px;top:1152px;width:4px;height:12px;background:#6d93bd"></div>
<div class="d" style="left:1078px;top:1164px;width:669px;height:1px;background:#111"></div>
<div style="position:absolute;left:1078px;top:1167px;width:30px;height:22px;overflow:hidden"><div class="a" style="left:-7px;top:0;font-size:15.500px;color:#a8a8a8">0:00f</div></div>
<div class="a" style="left:1158px;top:1167px;font-size:15.500px;color:#a8a8a8">04f</div>
<div class="a" style="left:1239px;top:1167px;font-size:15.500px;color:#a8a8a8">08f</div>
<div class="a" style="left:1321px;top:1167px;font-size:15.500px;color:#a8a8a8">12f</div>
<div class="a" style="left:1402px;top:1167px;font-size:15.500px;color:#a8a8a8">16f</div>
<div class="a" style="left:1484px;top:1167px;font-size:15.500px;color:#a8a8a8">20f</div>
<div class="a" style="left:1556px;top:1167px;font-size:15.500px;color:#a8a8a8">01:00f</div>
<div class="a" style="left:1646.400px;top:1167px;font-size:15.500px;color:#a8a8a8">04f</div>
<div class="a" style="left:1727px;top:1167px;font-size:15.500px;color:#a8a8a8">08f</div>
<svg class="d" style="left:1078px;top:1187px" width="669" height="9"><path d="M10.700 0v8M92 0v8M173 0v8M254 0v8M335.700 0v8M417 0v8M498.400 0v8M580 0v8M661 0v8" stroke="#999" stroke-width="1"/></svg>
<div class="d" style="left:1078px;top:1195px;width:669px;height:1.500px;background:#0c0c0c"></div>
<div class="d" style="left:1080px;top:1196px;width:8px;height:22px;background:#2e8ff0;border-radius:4px 0 0 4px"></div>
<div class="d" style="left:1088px;top:1196.500px;width:659px;height:21.500px;background:#666"></div>
<div class="d" style="left:1088px;top:1220px;width:659px;height:5px;background:#1db31d;border-top:1px solid #111;box-sizing:border-box"></div>
<!-- playhead -->
<div class="d" style="left:1555.500px;top:1190px;width:1.500px;height:790px;background:#2f7fdc"></div>
<svg class="d" style="left:1547px;top:1172px" width="19" height="24"><path d="M1 1h17v11L9.500 23 1 12z" fill="#2e8ff0"/><path d="M9.500 12v11" stroke="#222" stroke-width="1.200"/><path d="M7 12h5" stroke="#222"/></svg>

<!-- status bar -->
<div class="d" style="left:3px;top:1980px;width:1744px;height:26px;background:#232323"></div>
<div class="d" style="left:3px;top:1979.500px;width:1234px;height:1.500px;background:#0e0e0e"></div>
<svg class="d" style="left:3px;top:1981px" width="1240" height="25">
<rect x="6" y="1" width="25" height="23" fill="#171717"/><rect x="33" y="1" width="25" height="23" fill="#171717"/>
<rect x="10" y="5" width="10" height="10" fill="none" stroke="#2e86de" stroke-width="1.500"/><rect x="13" y="8" width="10" height="10" fill="none" stroke="#2e86de" stroke-width="1.500"/><rect x="16" y="11" width="10" height="10" fill="#171717" stroke="#2e86de" stroke-width="1.500"/><rect x="19.500" y="14.500" width="3" height="3" fill="#2e86de"/>
<circle cx="43" cy="10" r="6" fill="none" stroke="#2e86de" stroke-width="1.500"/><rect x="44" y="10" width="9" height="10" fill="#171717" stroke="#2e86de" stroke-width="1.500"/>
<path d="M66 4l4 3v11l-4 3-5-8.500zM75 4l-4 3v11l4 3 5-8.500z" fill="#a0a0a0"/>
<path d="M1084 9l3-3 3 3 1-1 4 4h-14z" fill="#bbb"/>
<rect x="1120" y="11" width="65" height="2.500" fill="#4a4a4a"/>
<circle cx="1120" cy="13" r="5.500" fill="#232323" stroke="#aaa" stroke-width="2"/>
<path d="M1205 19l7-12 5 8 2-3 4.500 7zM1201 19l5-8 2 2-3 6z" fill="#bbb"/>
</svg>
<div class="d" style="left:2px;top:2006px;width:1745px;height:1.500px;background:#2a6db5"></div>
<div class="d" style="left:0;top:2007.500px;width:1747px;height:2.500px;background:#1a1a1a"></div>
<div class="d" style="left:0;top:2010px;width:1747px;height:3px;background:#d6d6d6"></div>
</div></body></html>
